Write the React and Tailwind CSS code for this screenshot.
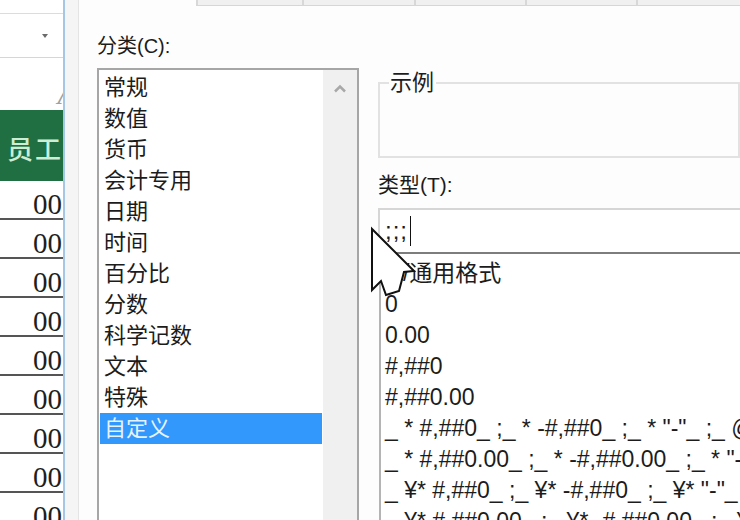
const categories = ['常规', '数值', '货币', '会计专用', '日期', '时间', '百分比', '分数', '科学记数', '文本', '特殊', '自定义'];

const formats = [
  'G/通用格式',
  '0',
  '0.00',
  '#,##0',
  '#,##0.00',
  '_ * #,##0_ ;_ * -#,##0_ ;_ * "-"_ ;_ @_ ',
  '_ * #,##0.00_ ;_ * -#,##0.00_ ;_ * "-"??_ ;_ @_ ',
  '_ ¥* #,##0_ ;_ ¥* -#,##0_ ;_ ¥* "-"_ ;_ @_ ',
  '_ ¥* #,##0.00_ ;_ ¥* -#,##0.00_ ;_ ¥* "-"??_ ;_ @_ ',
];

const SheetStrip = () => (
  <div className="w-[63px] shrink-0 flex flex-col overflow-hidden bg-white">
    <div className="h-[13px] shrink-0" />
    <div className="h-[1px] shrink-0 bg-[#dcdcdc]" />
    <div className="h-[43px] shrink-0 flex items-center justify-end pr-[15px]">
      <svg width="6" height="4" viewBox="0 0 6 4">
        <path d="M0 0 L6 0 L3 4 Z" fill="#6b6b6b" />
      </svg>
    </div>
    <div className="h-[1px] shrink-0 bg-[#d6d6d6]" />
    <div className="h-[52px] shrink-0 flex items-end justify-end pb-[1px]">
      <span className="text-[32px] leading-[32px] font-light text-[#a0a0a0] mr-[-14px] font-['Liberation_Serif',serif] italic">A</span>
    </div>
    <div className="h-[71px] shrink-0 bg-[#1f6f43] flex items-center justify-end pt-[8px]">
      <span className="text-[26px] leading-none font-medium text-[#cdeed5] tracking-[2px]">员工</span>
    </div>
    {Array.from({ length: 9 }).map((_, i) => (
      <div
        key={i}
        className="h-[39px] shrink-0 border-b-2 border-[#555555] flex items-center justify-end pt-[9px] pr-[1px]"
      >
        <span className="text-[29px] leading-none text-[#1e1e1e] font-['Liberation_Serif',serif]">00</span>
      </div>
    ))}
  </div>
);

const CategoryList = () => (
  <div className="w-[262px] h-[460px] mt-[10px] border-2 border-[#a6a6a6] flex bg-white">
    <div className="flex-1 flex flex-col pt-[2px]">
      {categories.map((c) => (
        <div
          key={c}
          className={
            c === '自定义'
              ? 'h-[31px] mx-[1px] pl-[4px] flex items-center bg-[#3298fb] text-[#e6f3ff]'
              : 'h-[31px] mx-[1px] pl-[4px] flex items-center text-[#1c1c1c]'
          }
        >
          {c}
        </div>
      ))}
    </div>
    <div className="w-[34px] bg-[#f0f0f0] flex justify-center">
      <svg width="12" height="9" viewBox="0 0 12 9" className="mt-[14px]">
        <path d="M1 7.5 L6 2.5 L11 7.5" fill="none" stroke="#a8a8a8" strokeWidth="2.5" />
      </svg>
    </div>
  </div>
);

const Cursor = () => (
  <svg
    width="52"
    height="80"
    viewBox="0 0 52 80"
    className="absolute left-[368px] top-[225px] pointer-events-none"
  >
    <path
      d="M4 4 L4 65 L13 56 L18 70 L31 66 L36 47 L46 46 Z"
      fill="#ffffff"
      stroke="#111111"
      strokeWidth="2"
      strokeLinejoin="miter"
    />
  </svg>
);

const App = () => {
  return (
    <div className="w-[740px] h-[520px] overflow-hidden flex relative bg-white text-[22px] font-['Liberation_Sans','Noto_Sans_CJK_SC',sans-serif] select-none">
      {/* Spreadsheet behind the dialog */}
      <SheetStrip />
      <div className="w-[2px] shrink-0 bg-[#a6c6e6]" />
      <div className="w-[13px] shrink-0 bg-[#f5f5f5]" />
      <div className="w-[1px] shrink-0 bg-[#e4e4e4]" />

      {/* Format cells dialog */}
      <div className="flex-1 flex flex-col bg-[#fdfdfd] overflow-hidden">
        <div className="h-[6px] shrink-0 ml-[117px] flex bg-[#f0f0f0] border-b border-[#d6d6d6]">
          <div className="w-[108px] border-l-2 border-r-2 border-[#d8d8d8]" />
          <div className="w-[112px] border-r-2 border-[#d8d8d8]" />
          <div className="w-[111px] border-r-2 border-[#d8d8d8]" />
          <div className="w-[111px] border-r-2 border-[#d8d8d8]" />
          <div className="flex-1" />
        </div>

        <div className="flex pl-[18px] gap-[19px]">
          {/* Category column */}
          <div className="w-[262px] shrink-0 flex flex-col">
            <div className="mt-[28px] text-[20px] leading-[24px] text-[#1c1c1c]">分类(C):</div>
            <CategoryList />
          </div>

          {/* Sample + type column */}
          <div className="flex-1 min-w-0 flex flex-col mt-[65px]">
            <fieldset className="border-2 border-[#e2e2e2] p-0 m-0">
              <legend className="ml-[9px] pl-[1px] pr-[2px] text-[22px] leading-[24px] text-[#1c1c1c]">示例</legend>
              <div className="h-[61px]" />
            </fieldset>

            <div className="mt-[15px] text-[21px] leading-[24px] text-[#1c1c1c]">类型(T):</div>

            <div className="mt-[11px] h-[46px] shrink-0 border-t-2 border-l-2 border-b-2 border-t-[#d6d6d6] border-l-[#d6d6d6] border-b-[#7d7d7d] bg-white flex items-center pl-[5px]">
              <span className="text-[24px] leading-none text-[#1c1c1c] tracking-[1px]">;;;</span>
              <span className="w-[1px] h-[30px] bg-[#111111] ml-[2px]" />
            </div>

            <div className="ml-[1px] border-l-2 border-[#b4b4b4] bg-white flex flex-col pt-[4px] pl-[4px] h-[300px] overflow-hidden">
              {formats.map((f) => (
                <div key={f} className="h-[31px] shrink-0 flex items-center whitespace-pre text-[23px] text-[#1c1c1c]">
                  {f}
                </div>
              ))}
            </div>
          </div>
        </div>
      </div>

      <Cursor />
    </div>
  );
};

export default App;
